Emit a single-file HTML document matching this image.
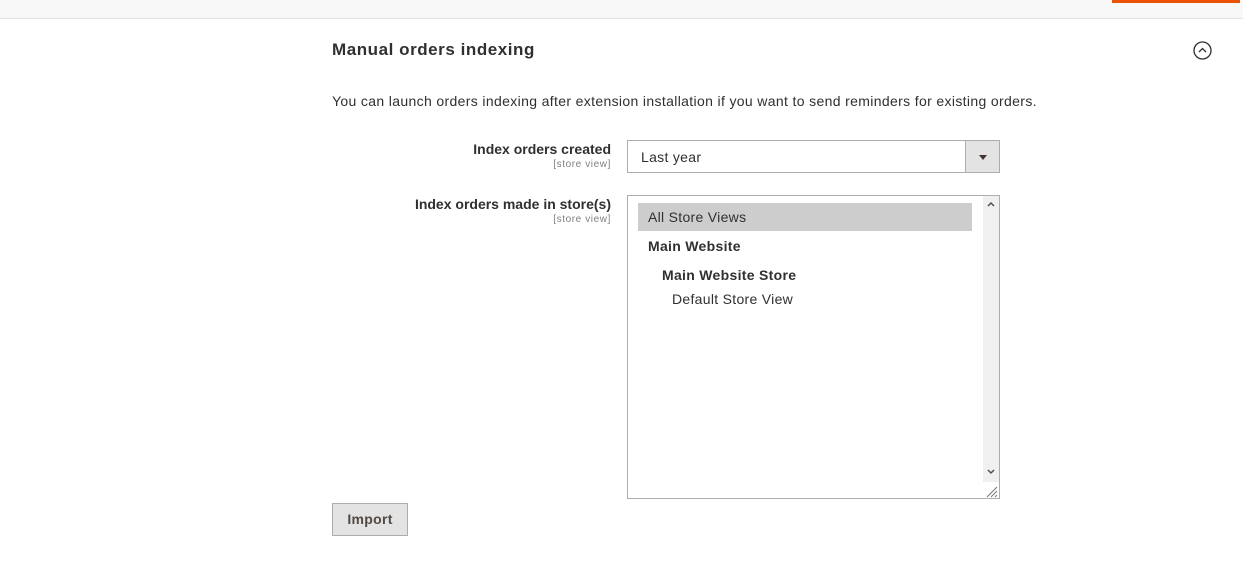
<!DOCTYPE html>
<html><head><style>
body{margin:0;width:1243px;height:570px;background:#fff;font-family:"Liberation Sans",sans-serif;color:#303030;position:relative;overflow:hidden}
.a{position:absolute}
.sv{font-size:10px;color:#808080;margin-top:2px;letter-spacing:0.6px}
</style></head><body>
<div class="a" style="left:0;top:0;width:1243px;height:18px;background:#f8f8f8;border-bottom:1px solid #e3e3e3"></div>
<div class="a" style="left:1112px;top:0;width:128px;height:3px;background:#eb5202"></div>
<div class="a" style="left:332px;top:40px;font-size:17px;font-weight:bold;color:#303030;letter-spacing:0.55px">Manual orders indexing</div>
<svg class="a" style="left:1193px;top:41px" width="19" height="19" viewBox="0 0 19 19"><circle cx="9.5" cy="9.5" r="8.5" fill="none" stroke="#303030" stroke-width="1.3"/><path d="M6 11 L9.5 7.5 L13 11" fill="none" stroke="#303030" stroke-width="1.3"/></svg>
<div class="a" style="left:332px;top:93px;font-size:14px;color:#303030;letter-spacing:0.35px">You can launch orders indexing after extension installation if you want to send reminders for existing orders.</div>
<div class="a" style="right:632px;top:141px;text-align:right"><div style="font-size:14px;font-weight:bold">Index orders created</div><div class="sv">[store view]</div></div>
<div class="a" style="left:627px;top:140px;width:371px;height:31px;border:1px solid #adadad;background:#fff">
<div class="a" style="left:13px;top:8px;font-size:14px;letter-spacing:0.3px">Last year</div>
<div class="a" style="right:0;top:0;width:33px;height:31px;background:#e3e3e3;border-left:1px solid #adadad"></div>
<div class="a" style="right:12px;top:14px;width:0;height:0;border-left:4px solid transparent;border-right:4px solid transparent;border-top:5px solid #41362f"></div>
</div>
<div class="a" style="right:632px;top:196px;text-align:right"><div style="font-size:14px;font-weight:bold">Index orders made in store(s)</div><div class="sv">[store view]</div></div>
<div class="a" style="left:627px;top:195px;width:371px;height:302px;border:1px solid #adadad;background:#fff;letter-spacing:0.3px">
<div class="a" style="left:10px;top:7px;width:334px;height:28px;background:#cdcdcd"></div>
<div class="a" style="left:20px;top:13px;font-size:14px">All Store Views</div>
<div class="a" style="left:20px;top:42px;font-size:14px;font-weight:bold">Main Website</div>
<div class="a" style="left:34px;top:71px;font-size:14px;font-weight:bold">Main Website Store</div>
<div class="a" style="left:44px;top:95px;font-size:14px">Default Store View</div>
<div class="a" style="left:355px;top:0;width:16px;height:286px;background:#f0f0f0"></div>
<svg class="a" style="left:357px;top:3px" width="12" height="10"><path d="M3 7 L6 4 L9 7" fill="none" stroke="#505050" stroke-width="1.5"/></svg>
<svg class="a" style="left:357px;top:271px" width="12" height="10"><path d="M3 3 L6 6 L9 3" fill="none" stroke="#505050" stroke-width="1.5"/></svg>
<svg class="a" style="left:356px;top:288px" width="14" height="14"><path d="M13 3 L3 13 M13 7 L7 13 M13 11 L11 13" stroke="#777" stroke-width="1"/></svg>
</div>
<div class="a" style="left:332px;top:503px;width:74px;height:31px;border:1px solid #adadad;background:#e3e3e3;font-size:14px;font-weight:bold;color:#514943;text-align:center;line-height:31px;letter-spacing:0.3px">Import</div>
</body></html>
